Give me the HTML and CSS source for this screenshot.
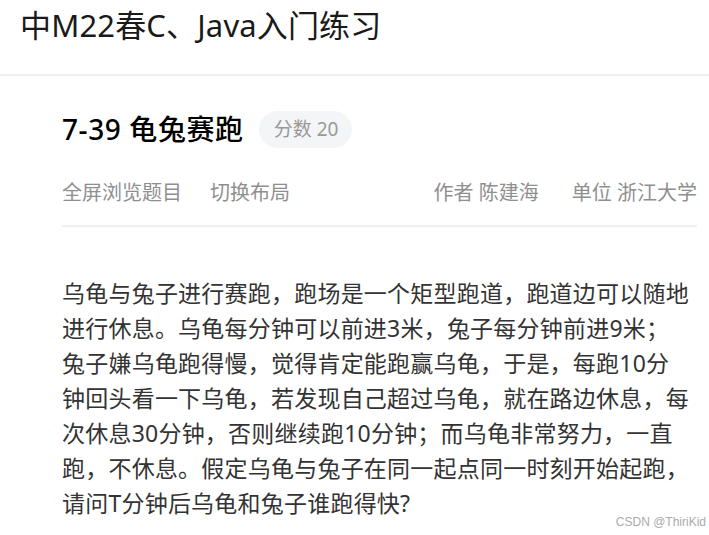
FILE: index.html
```html
<!DOCTYPE html>
<html lang="zh-CN">
<head>
<meta charset="utf-8">
<title>中M22春C、Java入门练习</title>
<link rel="stylesheet" href="styles.css">
</head>
<body>
<header class="topbar">
  <h1 class="set-title">中M22春C、Java入门练习</h1>
</header>
<main class="problem">
  <div class="problem-head">
    <h2 class="problem-title">7-39 龟兔赛跑</h2>
    <span class="score">分数 20</span>
  </div>
  <div class="meta">
    <div class="actions">
      <span>全屏浏览题目</span>
      <span>切换布局</span>
    </div>
    <div class="info">
      <span>作者 陈建海</span>
      <span>单位 浙江大学</span>
    </div>
  </div>
  <div class="content">
    <p>乌龟与兔子进行赛跑，跑场是一个矩型跑道，跑道边可以随地<br>进行休息。乌龟每分钟可以前进3米，兔子每分钟前进9米；<br>兔子嫌乌龟跑得慢，觉得肯定能跑赢乌龟，于是，每跑10分<br>钟回头看一下乌龟，若发现自己超过乌龟，就在路边休息，每<br>次休息30分钟，否则继续跑10分钟；而乌龟非常努力，一直<br>跑，不休息。假定乌龟与兔子在同一起点同一时刻开始起跑，<br>请问T分钟后乌龟和兔子谁跑得快?</p>
  </div>
</main>
<div class="watermark">CSDN @ThiriKid</div>
</body>
</html>
```

FILE: styles.css
```css
html, body {
  margin: 0;
  padding: 0;
  background: #ffffff;
  font-family: "Noto Sans", "Noto Sans CJK SC", sans-serif;
  overflow: hidden;
}

.topbar {
  height: 74px;
  border-bottom: 2px solid #f0f0f0;
  display: flex;
  align-items: flex-start;
  padding: 0 20px;
}

.set-title {
  margin: 0;
  margin-top: 5px;
  font-size: 31px;
  font-weight: 400;
  line-height: 40px;
  letter-spacing: 0.15px;
  color: #1a1a1a;
}

.problem {
  padding: 0 12px 0 62px;
}

.problem-head {
  display: flex;
  align-items: center;
  gap: 15px;
  margin-top: 35px;
  height: 37px;
}

.problem-title {
  margin: 0;
  font-size: 28px;
  font-weight: 500;
  letter-spacing: 0.6px;
  color: #000;
  line-height: 37px;
}

.score {
  height: 37px;
  line-height: 37px;
  padding: 0 14px 0 15px;
  border-radius: 19px;
  background: #f4f5f7;
  color: #999;
  font-size: 19px;
}

.meta {
  display: flex;
  justify-content: space-between;
  align-items: center;
  margin-top: 26px;
  height: 34px;
  font-size: 20px;
  color: #8f8f8f;
  padding-bottom: 17px;
  border-bottom: 2px solid #f0f0f0;
}

.actions, .info {
  display: flex;
  gap: 28px;
}

.info {
  gap: 33px;
}

.content {
  padding-top: 49px;
}

.content p {
  margin: 0;
  font-size: 23px;
  line-height: 35px;
  letter-spacing: 0.22px;
  color: #333;
  white-space: nowrap;
}

.watermark {
  position: absolute;
  right: 3px;
  bottom: 6px;
  font-family: "Liberation Sans", sans-serif;
  font-size: 12px;
  color: #aaa;
}
```
